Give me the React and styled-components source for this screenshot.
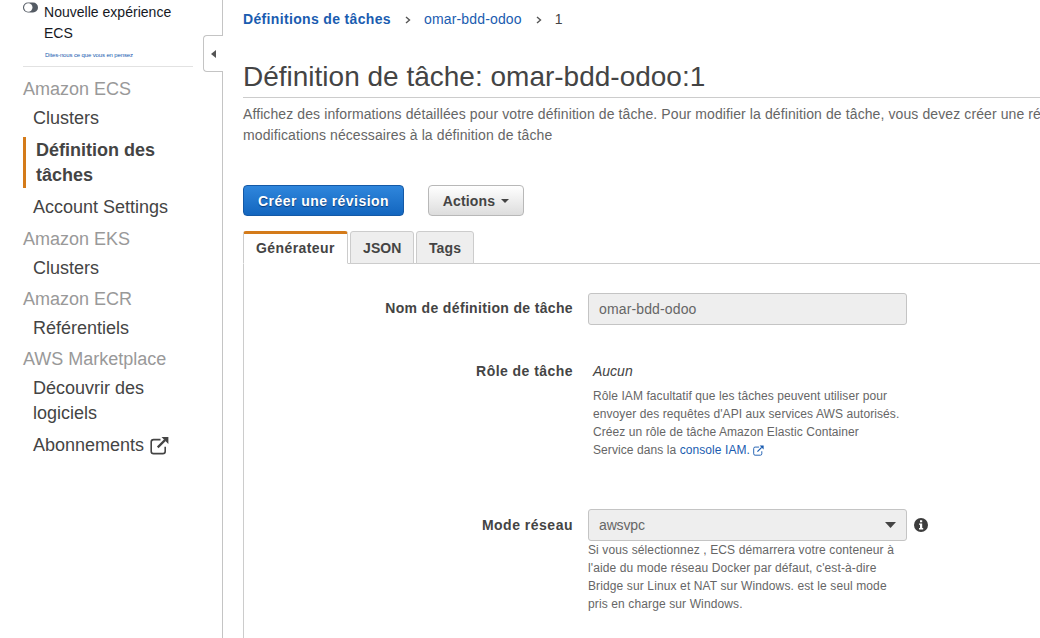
import React from "react";
import styled, { createGlobalStyle } from "styled-components";

const GlobalStyle = createGlobalStyle`
  * { box-sizing: border-box; }
  body {
    margin: 0;
    overflow: hidden;
    background: #fff;
    color: #444;
    font: 14px/21px "Liberation Sans", Arial, sans-serif;
  }
  a { color: #1a5cb0; text-decoration: none; }
`;

const Page = styled.div`
  display: flex;
  height: 638px;
  overflow: hidden;
`;

const Sidebar = styled.aside`
  position: relative;
  flex: none;
  width: 223px;
  padding-left: 23px;
  border-right: 1px solid #c4c4c4;
`;

const Collapse = styled.button`
  position: absolute;
  top: 35px;
  right: -1px;
  width: 20px;
  height: 37px;
  padding: 0 0 0 7px;
  display: flex;
  align-items: center;
  background: #fff;
  border: 1px solid #c4c4c4;
  border-right: 0;
  border-radius: 4px 0 0 4px;
`;

const Experience = styled.div`
  display: flex;
  gap: 6px;
  width: 170px;
  height: 67px;
  padding-top: 2px;
  border-bottom: 1px solid #e2e2e2;
`;

const ExperienceText = styled.div`
  color: #16191f;
  line-height: 21px;
  letter-spacing: 0.02px;
  white-space: nowrap;
`;

const Feedback = styled.a`
  display: block;
  margin: 7px 0 0 1px;
  font-size: 6px;
  line-height: 8px;
  letter-spacing: -0.13px;
`;

const Nav = styled.nav`
  display: flex;
  flex-direction: column;
  gap: 6px;
  padding-top: 10px;
  font-size: 18px;
  line-height: 25px;
`;

const GroupTitle = styled.div`
  margin-bottom: 4px;
  color: #999;
`;

const Items = styled.div`
  display: flex;
  flex-direction: column;
  gap: 7px;
`;

const Item = styled.div`
  width: ${(p) => (p.$active ? "150px" : "160px")};
  margin: ${(p) => (p.$active ? "-1px 0 0 0" : "0 0 0 10px")};
  padding: ${(p) => (p.$active ? "1px 0 0 10px" : 0)};
  border-left: ${(p) => (p.$active ? "3px solid #d47b1a" : 0)};
  font-weight: ${(p) => (p.$active ? "bold" : "normal")};
  svg { margin-left: 6px; vertical-align: -4px; }
`;

const Group = styled.div`
  padding-bottom: ${(p) => (p.$spaced ? "1px" : 0)};
`;

const Main = styled.main`
  flex: 1;
  min-width: 0;
  display: flex;
  flex-direction: column;
  padding: 9px 0 0 20px;
`;

const Breadcrumbs = styled.div`
  display: flex;
  align-items: center;
  height: 21px;
  svg { margin: 1px 13px 0 14px; }
`;

const Crumb = styled.span`
  color: ${(p) => (p.$link ? "#1a5cb0" : "#444")};
  font-weight: ${(p) => (p.$bold ? "bold" : "normal")};
  letter-spacing: ${(p) => (p.$bold ? "0.34px" : "0.16px")};
`;

const Title = styled.h1`
  margin: 28px 0 6px;
  height: 40px;
  border-bottom: 1px solid #ccc;
  font-size: 28px;
  line-height: 37px;
  font-weight: normal;
`;

const Intro = styled.p`
  width: 860px;
  margin: 0;
  color: #666;
  white-space: nowrap;
  letter-spacing: 0.1px;
`;

const Actions = styled.div`
  display: flex;
  gap: 24px;
  margin-top: 39px;
`;

const Button = styled.button`
  display: flex;
  align-items: center;
  justify-content: center;
  gap: 6px;
  width: ${(p) => p.$width};
  height: 31px;
  padding: 0;
  border: 1px solid ${(p) => (p.$primary ? "#1459a6" : "#b8b8b8")};
  border-radius: 4px;
  background: ${(p) =>
    p.$primary
      ? "linear-gradient(#2f86dc, #1366bf)"
      : "linear-gradient(#fff, #ddd)"};
  color: ${(p) => (p.$primary ? "#fff" : "#444")};
  text-shadow: ${(p) => (p.$primary ? "0 1px 1px #0a3a78" : "none")};
  font: bold 14px/20px "Liberation Sans", Arial, sans-serif;
  letter-spacing: ${(p) => (p.$primary ? "0.45px" : "0.15px")};
`;

const Tabs = styled.div`
  display: flex;
  gap: 2px;
  margin-top: 15px;
`;

const Tab = styled.div`
  width: ${(p) => p.$width};
  height: 33px;
  position: relative;
  border: 1px solid #ccc;
  border-top: ${(p) => (p.$active ? "3px solid #d47b1a" : "1px solid #ccc")};
  border-bottom-color: ${(p) => (p.$active ? "#fff" : "#ccc")};
  border-radius: 3px 3px 0 0;
  background: ${(p) => (p.$active ? "#fff" : "#eee")};
  padding-left: 12px;
  font-weight: bold;
  line-height: ${(p) => (p.$active ? "28px" : "32px")};
  letter-spacing: ${(p) => (p.$active ? "0.42px" : "0.1px")};
`;

const Panel = styled.section`
  flex: 1;
  margin-top: -1px;
  padding-top: 29px;
  border: solid #ccc;
  border-width: 1px 0 0 1px;
`;

const FormRow = styled.div`
  display: grid;
  grid-template-columns: 329px 1fr;
  column-gap: 15px;
  height: ${(p) => p.$height};
`;

const Label = styled.label`
  padding-top: ${(p) => p.$top || "6px"};
  text-align: right;
  font-weight: bold;
  letter-spacing: ${(p) => p.$track || "0.45px"};
`;

const FieldLine = styled.div`
  display: flex;
  align-items: center;
  gap: 7px;
`;

const Field = styled.div`
  display: flex;
  align-items: center;
  justify-content: space-between;
  width: 319px;
  height: 32px;
  padding: 0 10px;
  border: 1px solid #c4c4c4;
  border-radius: 3px;
  background: #eee;
  color: #666;
  letter-spacing: ${(p) => p.$track || "normal"};
`;

const Role = styled.div`
  padding: 6px 0 0 5px;
`;

const Help = styled.div`
  color: #666;
  font-size: 12px;
  line-height: 18px;
  white-space: nowrap;
  letter-spacing: ${(p) => p.$track || "0.08px"};
  margin-top: ${(p) => p.$top || 0};
  svg { vertical-align: -2px; }
`;

const External = ({ size }) => (
  <svg width={size} height={size} viewBox="0 0 19 19" fill="none">
    <path d="M10.5 3.6H3.6A2.4 2.4 0 0 0 1.2 6v9.2a2.4 2.4 0 0 0 2.4 2.4h9.2a2.4 2.4 0 0 0 2.4-2.4v-4.4" stroke="currentColor" strokeWidth="1.6" />
    <path d="M7.7 11.4 15 4.1" stroke="currentColor" strokeWidth="2.2" />
    <path d="M11.5 1H18.4V7.9Z" fill="currentColor" />
  </svg>
);

const Caret = ({ width, height }) => (
  <svg width={width} height={height} viewBox="0 0 10 5" preserveAspectRatio="none">
    <path d="M0 0H10L5 5Z" fill="#444" />
  </svg>
);

const Separator = () => (
  <svg width="6" height="8" viewBox="0 0 6 8" fill="none">
    <path d="M1 1 4.5 4 1 7" stroke="#555" strokeWidth="1.4" />
  </svg>
);

const Toggle = () => (
  <svg width="15" height="11" viewBox="0 0 15 11">
    <rect x="0" y="0.5" width="15" height="10" rx="5" fill="#545b64" />
    <circle cx="5.3" cy="5.5" r="4.2" fill="#fff" />
  </svg>
);

const Info = () => (
  <svg width="14" height="14" viewBox="0 0 14 14">
    <circle cx="7" cy="7" r="7" fill="#3c3c3c" />
    <path d="M6 2.2H8.2V4.3H6ZM5 5.4H8.2V10H9.2V11.4H5V10H6V6.8H5Z" fill="#fff" />
  </svg>
);

export default function App() {
  return (
    <Page>
      <GlobalStyle />
      <Sidebar>
        <Experience>
          <Toggle />
          <ExperienceText>
            Nouvelle expérience<br />ECS
            <Feedback>Dites-nous ce que vous en pensez</Feedback>
          </ExperienceText>
        </Experience>
        <Collapse aria-label="Réduire">
          <svg width="5" height="8" viewBox="0 0 5 8"><path d="M5 0V8L0 4Z" fill="#555" /></svg>
        </Collapse>
        <Nav>
          <Group $spaced>
            <GroupTitle>Amazon ECS</GroupTitle>
            <Items>
              <Item>Clusters</Item>
              <Item $active>Définition des<br />tâches</Item>
              <Item>Account Settings</Item>
            </Items>
          </Group>
          <Group>
            <GroupTitle>Amazon EKS</GroupTitle>
            <Items><Item>Clusters</Item></Items>
          </Group>
          <Group>
            <GroupTitle>Amazon ECR</GroupTitle>
            <Items><Item>Référentiels</Item></Items>
          </Group>
          <Group>
            <GroupTitle>AWS Marketplace</GroupTitle>
            <Items>
              <Item>Découvrir des<br />logiciels</Item>
              <Item>Abonnements<External size={19} /></Item>
            </Items>
          </Group>
        </Nav>
      </Sidebar>
      <Main>
        <Breadcrumbs>
          <Crumb $link $bold>Définitions de tâches</Crumb>
          <Separator />
          <Crumb $link>omar-bdd-odoo</Crumb>
          <Separator />
          <Crumb>1</Crumb>
        </Breadcrumbs>
        <Title>Définition de tâche: omar-bdd-odoo:1</Title>
        <Intro>
          Affichez des informations détaillées pour votre définition de tâche. Pour modifier la définition de tâche, vous devez créer une révision
          <br />
          modifications nécessaires à la définition de tâche
        </Intro>
        <Actions>
          <Button $primary $width="161px">Créer une révision</Button>
          <Button $width="96px">Actions <Caret width={8} height={4} /></Button>
        </Actions>
        <Tabs>
          <Tab $active $width="105px">Générateur</Tab>
          <Tab $width="64px">JSON</Tab>
          <Tab $width="58px">Tags</Tab>
        </Tabs>
        <Panel>
          <FormRow $height="62px">
            <Label $top="5px" $track="0.34px">Nom de définition de tâche</Label>
            <Field $track="0.14px">omar-bdd-odoo</Field>
          </FormRow>
          <FormRow $height="154px">
            <Label>Rôle de tâche</Label>
            <Role>
              <i>Aucun</i>
              <Help $top="5px">
                Rôle IAM facultatif que les tâches peuvent utiliser pour<br />
                envoyer des requêtes d'API aux services AWS autorisés.<br />
                Créez un rôle de tâche Amazon Elastic Container<br />
                Service dans la <a>console IAM. <External size={11} /></a>
              </Help>
            </Role>
          </FormRow>
          <FormRow $height="110px">
            <Label $track="0.5px">Mode réseau</Label>
            <div>
              <FieldLine>
                <Field $track="-0.15px">awsvpc <Caret width={11} height={6} /></Field>
                <Info />
              </FieldLine>
              <Help $track="0.12px">
                Si vous sélectionnez , ECS démarrera votre conteneur à<br />
                l'aide du mode réseau Docker par défaut, c'est-à-dire<br />
                Bridge sur Linux et NAT sur Windows. est le seul mode<br />
                pris en charge sur Windows.
              </Help>
            </div>
          </FormRow>
        </Panel>
      </Main>
    </Page>
  );
}
